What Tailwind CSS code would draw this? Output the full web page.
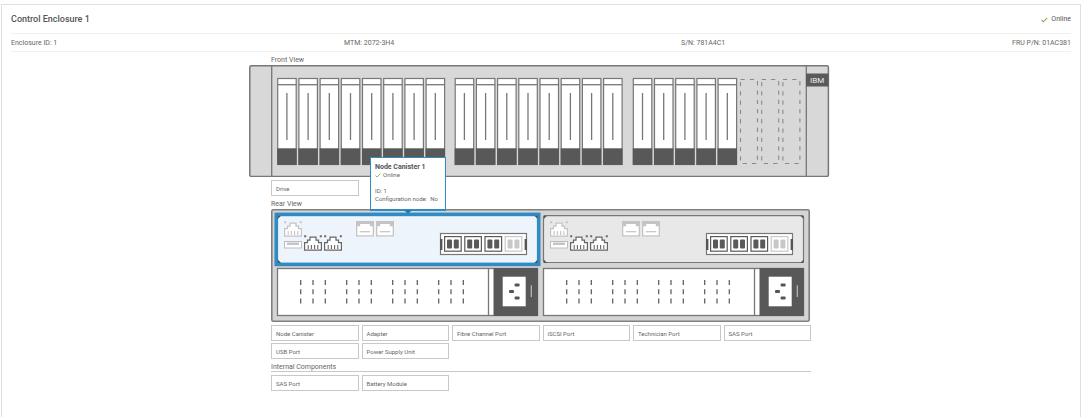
<!DOCTYPE html>
<html lang="en">
<head>
    <meta charset="UTF-8">
    <meta name="viewport" content="width=device-width, initial-scale=1.0">
    <title>Control Enclosure 1</title>
    <script src="https://cdn.jsdelivr.net/npm/@tailwindcss/browser@4"></script>
</head>
<body class="bg-white font-['Roboto','Liberation_Sans',sans-serif] text-[7px] text-[#666]">
    <!-- Shared shapes -->
    <svg class="absolute w-0 h-0" aria-hidden="true">
        <defs>
            <g id="drive">
                <rect x="0.5" y="0.5" width="18.5" height="86" fill="#fff" stroke="#777" stroke-width="1.2"/>
                <path d="M0.5 6.7H19" stroke="#777" stroke-width="1.3"/>
                <path d="M9.7 15V62" stroke="#777" stroke-width="1.3"/>
                <rect x="0" y="70.3" width="19.4" height="16.6" fill="#585858"/>
            </g>
            <g id="drives5">
                <use href="#drive"/>
                <use href="#drive" x="21.2"/>
                <use href="#drive" x="42.4"/>
                <use href="#drive" x="63.6"/>
                <use href="#drive" x="84.8"/>
            </g>
            <g id="drives8">
                <use href="#drives5"/>
                <use href="#drive" x="106"/>
                <use href="#drive" x="127.2"/>
                <use href="#drive" x="148.4"/>
            </g>
            <path id="emptyBay" d="M0.5 0.5H17.5V84.5H0.5Z" fill="none" stroke="#8a8a8a" stroke-width="1.1" stroke-dasharray="4.3 5"/>
            <g id="ethernet" stroke="currentColor">
                <path d="M0.6 15.2V7.6H3.5V5.2H6V2.2H12V5.2H14.5V7.6H17.4V15.2Z" fill="#fff" stroke-width="1.2"/>
                <path d="M4.2 10V14M7.4 10V14M10.6 10V14M13.8 10V14" stroke-width="1.1"/>
                <path d="M0.2 1.2H2.2M15.8 1.2H17.8" stroke-width="2"/>
            </g>
            <g id="usb">
                <rect x="0.5" y="0.5" width="17" height="6.5" fill="#fff" stroke="#bdbdbd"/>
                <rect x="3" y="1.5" width="12" height="2.5" fill="#c4c4c4"/>
            </g>
            <g id="sas">
                <rect x="0" y="0" width="18" height="15.5" fill="#c4c4c4"/>
                <path d="M1.3 5.2H4.2V3H13.8V5.2H16.7V14.2H1.3Z" fill="#fff"/>
                <path d="M3.8 10.7H14.2" stroke="#c4c4c4" stroke-width="1.2"/>
            </g>
            <g id="fibre">
                <rect x="0.6" y="0.6" width="16.6" height="14.6" fill="#fff" stroke="currentColor" stroke-width="1.2"/>
                <rect x="3" y="3.4" width="5" height="9" rx="1" fill="currentColor"/>
                <rect x="9.8" y="3.4" width="5" height="9" rx="1" fill="currentColor"/>
            </g>
            <g id="canisterPorts">
                <use href="#ethernet" x="284" y="221" color="#c4c4c4"/>
                <use href="#usb" x="284" y="241"/>
                <use href="#ethernet" x="304" y="235" color="#666"/>
                <use href="#ethernet" x="324" y="235" color="#666"/>
                <use href="#sas" x="356" y="221"/>
                <use href="#sas" x="376" y="221"/>
                <rect x="440.5" y="233.5" width="86" height="21" fill="#fff" stroke="#777" stroke-width="1.2"/>
                <path d="M441.2 239V250M525.8 239V250" stroke="#555" stroke-width="2.4"/>
                <use href="#fibre" x="444" y="236" color="#5a5a5a"/>
                <use href="#fibre" x="464.2" y="236" color="#5a5a5a"/>
                <use href="#fibre" x="484.4" y="236" color="#5a5a5a"/>
                <use href="#fibre" x="504.6" y="236" color="#c8c8c8"/>
                <path d="M277.8 219V215.7H281.1ZM537.6 219V215.7H534.3ZM277.8 259.6V262.9H281.1ZM537.6 259.6V262.9H534.3Z" fill="#555"/>
            </g>
            <path id="vents" d="M0 0V5M12.3 0V5M24.6 0V5M0 9.2V14.2M12.3 9.2V14.2M24.6 9.2V14.2M0 18.4V23.4M12.3 18.4V23.4M24.6 18.4V23.4" stroke="#555" stroke-width="1.2"/>
            <g id="powerSupply">
                <rect x="277.5" y="268.5" width="260" height="47" fill="#fff" stroke="#777" stroke-width="1.3"/>
                <use href="#vents" x="300.7" y="280"/>
                <use href="#vents" x="346.7" y="280"/>
                <use href="#vents" x="392.7" y="280"/>
                <use href="#vents" x="438.7" y="280"/>
                <path d="M488.5 268V316" stroke="#777" stroke-width="1.3"/>
                <rect x="493.5" y="268" width="44.5" height="48" fill="#585858"/>
                <rect x="502.7" y="276.7" width="23" height="29.6" fill="#fff"/>
                <rect x="514.6" y="283.4" width="5" height="3" rx="1" fill="#555"/>
                <rect x="509" y="290" width="5" height="3" rx="1" fill="#555"/>
                <rect x="514.6" y="296.6" width="5" height="3" rx="1" fill="#555"/>
                <path d="M531.3 285.3V297" stroke="#bbb" stroke-width="1.2"/>
            </g>
            <path id="check" d="M0.6 3L2.4 4.8L6.2 0.8" fill="none" stroke="#8fa83c" stroke-width="1.1"/>
        </defs>
    </svg>

    <main class="mt-1 ml-px mr-[7px] min-h-[calc(100vh-4px)] border border-b-0 border-[#e0e0e0] px-[9px]">
        <!-- Header -->
        <header class="flex h-[29px] items-center justify-between border-b border-[#f0f0f0] pt-px">
            <h1 class="text-[9px] font-medium text-[#555]">Control Enclosure 1</h1>
            <p class="flex items-center gap-[3px] text-[#555]">
                <svg class="h-[6px] w-[7px]" viewBox="0 0 7 6"><use href="#check"/></svg>
                Online
            </p>
        </header>
        <div class="flex h-[18px] items-center justify-between border-b border-[#f0f0f0] pt-px">
            <p>Enclosure ID: 1</p>
            <p>MTM: 2072-3H4</p>
            <p>S/N: 781A4C1</p>
            <p>FRU P/N: 01AC381</p>
        </div>

        <div class="mx-auto max-w-[540px]">
            <!-- Front View -->
            <section>
                <h2 class="pt-1 leading-[9px]">Front View</h2>
                <svg class="-ml-[22px] block w-[calc(100%+42px)]" viewBox="249 65 582 112">
                    <rect x="249.8" y="65.8" width="578.6" height="110.6" rx="1.5" fill="#d8d8d8" stroke="#777" stroke-width="1.5"/>
                    <path d="M271.7 66V176M806.3 66V176" stroke="#777" stroke-width="1.3"/>
                    <use href="#drives8" x="277.2" y="78"/>
                    <use href="#drives8" x="454.7" y="78"/>
                    <use href="#drives5" x="632.8" y="78"/>
                    <use href="#emptyBay" x="740" y="79"/>
                    <use href="#emptyBay" x="761.2" y="79"/>
                    <use href="#emptyBay" x="782.4" y="79"/>
                    <rect x="806" y="73.5" width="22.5" height="13" fill="#5a5a5a"/>
                    <text x="817.2" y="83" text-anchor="middle" font-size="8" fill="#eee">IBM</text>
                </svg>
                <div class="mt-[3px] grid grid-cols-6 gap-x-[3px] text-[6px]">
                    <button class="h-4 border border-[#c8c8c8] px-1 text-left">Drive</button>
                </div>
            </section>

            <!-- Rear View -->
            <section>
                <h2 class="pt-1 leading-[9px]">Rear View</h2>
                <div class="relative">
                    <svg class="block w-full" viewBox="271 209 540 113">
                        <rect x="271.8" y="209.8" width="537.4" height="111.4" rx="1.5" fill="#d4d4d4" stroke="#808080" stroke-width="1.6"/>
                        <rect x="543.5" y="215.7" width="260" height="46.8" rx="2" fill="#e8e8e8" stroke="#777" stroke-width="1.2"/>
                        <rect x="276.3" y="214.4" width="262.4" height="50" fill="#edf4fb" stroke="#2f8bc3" stroke-width="3.6"/>
                        <use href="#canisterPorts"/>
                        <use href="#canisterPorts" x="266"/>
                        <use href="#powerSupply"/>
                        <use href="#powerSupply" x="266"/>
                    </svg>
                    <div role="tooltip" class="absolute bottom-[111px] left-[99px] w-19 whitespace-nowrap border border-b-2 border-[#2f8bc3] bg-white px-1 pt-[5px] text-[6px] leading-[8px]">
                        <p class="text-[7px] font-bold text-[#555]">Node Canister 1</p>
                        <p class="flex items-center gap-0.5">
                            <svg class="h-[5px] w-[6px]" viewBox="0 0 7 6"><use href="#check"/></svg>
                            Online
                        </p>
                        <p class="mt-2">ID: 1</p>
                        <p class="mb-[6px]">Configuration node: &nbsp;No</p>
                        <svg class="absolute top-full left-1/2 mt-px h-1 w-2 -translate-x-1/2" viewBox="0 0 8 4"><path d="M0 0H8L4 4Z" fill="#1f79b5"/></svg>
                    </div>
                </div>
                <div class="mt-[3px] grid grid-cols-6 gap-x-[3px] gap-y-0.5 text-[6px]">
                    <button class="h-4 border border-[#c8c8c8] px-1 text-left">Node Canister</button>
                    <button class="h-4 border border-[#c8c8c8] px-1 text-left">Adapter</button>
                    <button class="h-4 border border-[#c8c8c8] px-1 text-left">Fibre Channel Port</button>
                    <button class="h-4 border border-[#c8c8c8] px-1 text-left">iSCSI Port</button>
                    <button class="h-4 border border-[#c8c8c8] px-1 text-left">Technician Port</button>
                    <button class="h-4 border border-[#c8c8c8] px-1 text-left">SAS Port</button>
                    <button class="h-4 border border-[#c8c8c8] px-1 text-left">USB Port</button>
                    <button class="h-4 border border-[#c8c8c8] px-1 text-left">Power Supply Unit</button>
                </div>
            </section>

            <!-- Internal Components -->
            <section>
                <h2 class="border-b border-[#c8c8c8] pt-1 leading-[8px]">Internal Components</h2>
                <div class="mt-[3px] grid grid-cols-6 gap-x-[3px] text-[6px]">
                    <button class="h-4 border border-[#c8c8c8] px-1 text-left">SAS Port</button>
                    <button class="h-4 border border-[#c8c8c8] px-1 text-left">Battery Module</button>
                </div>
            </section>
        </div>
    </main>
</body>
</html>
